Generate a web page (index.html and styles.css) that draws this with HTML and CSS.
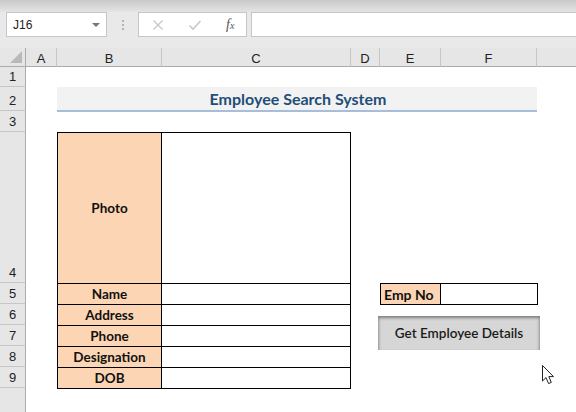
FILE: index.html
```html
<!DOCTYPE html>
<html>
<head>
<meta charset="utf-8">
<link rel="stylesheet" href="styles.css">
</head>
<body>
<div class="app">
  <div class="topstrip"></div>
  <div class="toolbar">
    <div class="namebox"><span class="ref">J16</span><span class="caret"></span></div>
    <div class="dots"><i></i><i></i><i></i></div>
    <div class="fxbox">
      <svg class="ico" width="12" height="12" viewBox="0 0 12 12"><path d="M1.5 1.5 L10.5 10.5 M10.5 1.5 L1.5 10.5" stroke="#c8c8c8" stroke-width="1.3" fill="none"/></svg>
      <svg class="ico" width="14" height="12" viewBox="0 0 14 12"><path d="M1.5 6.5 L5 10 L12.5 2" stroke="#c8c8c8" stroke-width="1.6" fill="none"/></svg>
      <span class="fx"><i>f</i><small><i>x</i></small></span>
    </div>
    <div class="formula"></div>
  </div>
  <div class="sheet">
    <div class="corner"><span class="tri"></span></div>
    <div class="colh">A</div>
    <div class="colh">B</div>
    <div class="colh">C</div>
    <div class="colh">D</div>
    <div class="colh">E</div>
    <div class="colh">F</div>
    <div class="colh last"></div>

    <div class="rowh r1">1</div>
    <div class="rowh r2">2</div>
    <div class="rowh r3">3</div>
    <div class="rowh r4">4</div>
    <div class="rowh r5">5</div>
    <div class="rowh r6">6</div>
    <div class="rowh r7">7</div>
    <div class="rowh r8">8</div>
    <div class="rowh r9">9</div>
    <div class="rowh r10"></div>

    <div class="title">Employee Search System</div>

    <div class="card">
      <div class="lbl photo">Photo</div><div class="val"></div>
      <div class="lbl">Name</div><div class="val"></div>
      <div class="lbl">Address</div><div class="val"></div>
      <div class="lbl">Phone</div><div class="val"></div>
      <div class="lbl">Designation</div><div class="val"></div>
      <div class="lbl">DOB</div><div class="val"></div>
    </div>

    <div class="empno"><div class="elbl">Emp No</div><div class="eval"></div></div>

    <div class="btn">Get Employee Details</div>

    <svg class="cursor" width="16" height="22" viewBox="0 0 16 22"><path d="M1.5 1.5 L1.5 17 L5 13.6 L7.6 19.6 L10.3 18.4 L7.8 12.6 L12.5 12.6 Z" fill="#fff" stroke="#222" stroke-width="1" stroke-linejoin="miter"/></svg>
  </div>
</div>
</body>
</html>
```
FILE: styles.css
```css
html, body { margin: 0; padding: 0; }
body { width: 576px; height: 412px; overflow: hidden; background: #fff; font-family: "Lato", "Open Sans", sans-serif; }
.app { width: 576px; height: 412px; display: flex; flex-direction: column; }
.topstrip { height: 12px; background: linear-gradient(#c9c9c9, #e4e4e4); }
.toolbar { height: 36px; background: #e9e9e9; display: flex; align-items: flex-start; padding-left: 6px; box-sizing: border-box; }
.namebox { width: 101px; height: 25px; box-sizing: border-box; border: 1px solid #c6c6c6; background: #fff; display: flex; align-items: center; justify-content: space-between; padding: 0 6px 0 6px; }
.ref { font-family: "Liberation Sans", sans-serif; font-size: 12px; color: #222; }
.caret { width: 0; height: 0; border-left: 4px solid transparent; border-right: 4px solid transparent; border-top: 4px solid #777; }
.dots { width: 31px; height: 25px; display: flex; flex-direction: column; align-items: center; justify-content: center; gap: 2px; }
.dots i { width: 2px; height: 2px; background: #b4b4b4; display: block; }
.fxbox { width: 109px; height: 25px; box-sizing: border-box; border: 1px solid #c6c6c6; background: #fff; display: flex; align-items: center; padding-left: 13px; gap: 24px; }
.fx { font-family: "Liberation Serif", serif; font-size: 14px; color: #555; }
.fx small { font-size: 10px; }
.formula { flex: 1; height: 25px; margin-left: 4px; box-sizing: border-box; border: 1px solid #c6c6c6; border-right: none; background: #fff; }

.sheet { position: relative; flex: 1; display: grid; grid-template-columns: 26px 31px 105px 189px 29px 61px 96px 1fr; grid-template-rows: 19px 20px 24px 21px 151px 21px 21px 21px 21px 21px 1fr; background: #fff; font-family: "Lato", sans-serif; }
.corner { grid-column: 1; grid-row: 1; background: #e6e6e6; border-right: 1px solid #ababab; border-bottom: 1px solid #ababab; position: relative; }
.tri { position: absolute; right: 3px; bottom: 3px; width: 0; height: 0; border-left: 12px solid transparent; border-bottom: 12px solid #b9b9b9; }
.colh { grid-row: 1; background: #e6e6e6; border-right: 1px solid #c6c6c6; border-bottom: 1px solid #ababab; font-size: 13px; color: #222; display: flex; align-items: center; justify-content: center; padding-top: 2px; box-sizing: border-box; font-family: "Liberation Sans", sans-serif; }
.colh.last { border-right: none; }
.rowh { grid-column: 1; background: #e6e6e6; border-right: 1px solid #ababab; border-bottom: 1px solid #c6c6c6; font-size: 13px; color: #222; display: flex; align-items: flex-end; justify-content: center; padding-bottom: 2px; box-sizing: border-box; font-family: "Liberation Sans", sans-serif; }
.r1 { grid-row: 2; } .r2 { grid-row: 3; } .r3 { grid-row: 4; } .r4 { grid-row: 5; } .r5 { grid-row: 6; }
.r6 { grid-row: 7; } .r7 { grid-row: 8; } .r8 { grid-row: 9; } .r9 { grid-row: 10; } .r10 { grid-row: 11; border-bottom: none; }

.title { grid-column: 3 / 8; grid-row: 3; background: #f2f2f2; border-bottom: 2px solid #a6bedc; color: #1f4e79; font-weight: bold; font-size: 16px; display: flex; align-items: center; justify-content: center; padding-left: 2px; box-sizing: border-box; height: 25px; }

.card { grid-column: 3 / 5; grid-row: 5 / 11; align-self: start; display: grid; grid-template-columns: 104px 1fr; grid-template-rows: 151px 21px 21px 21px 21px 20px; border: 1px solid #000; box-sizing: border-box; width: 294px; }
.lbl { background: #fcd5b4; border-right: 1px solid #000; border-bottom: 1px solid #000; font-weight: bold; font-size: 13.5px; color: #111; display: flex; align-items: center; justify-content: center; }
.val { border-bottom: 1px solid #000; }
.card .lbl:nth-last-child(2), .card .val:last-child { border-bottom: none; }

.empno { grid-column: 6 / 8; grid-row: 6; display: flex; border: 1px solid #000; box-sizing: border-box; height: 22px; width: 158px; }
.elbl { width: 60px; background: #fcd5b4; border-right: 1px solid #000; font-weight: bold; font-size: 14px; color: #111; display: flex; align-items: center; padding-left: 3px; box-sizing: border-box; }
.eval { flex: 1; }

.btn { grid-column: 6 / 8; grid-row: 7 / 9; margin-top: 12px; margin-left: -2px; width: 162px; height: 34px; background: #d6d6d6; box-shadow: inset 0 3px 3px -1px #7f7f7f, inset 3px 0 3px -2px #999, inset -3px 0 3px -2px #999; display: flex; align-items: center; justify-content: center; font-size: 13.5px; color: #1a1a1a; font-weight: 600; }

.cursor { position: absolute; left: 541px; top: 316px; }
```
